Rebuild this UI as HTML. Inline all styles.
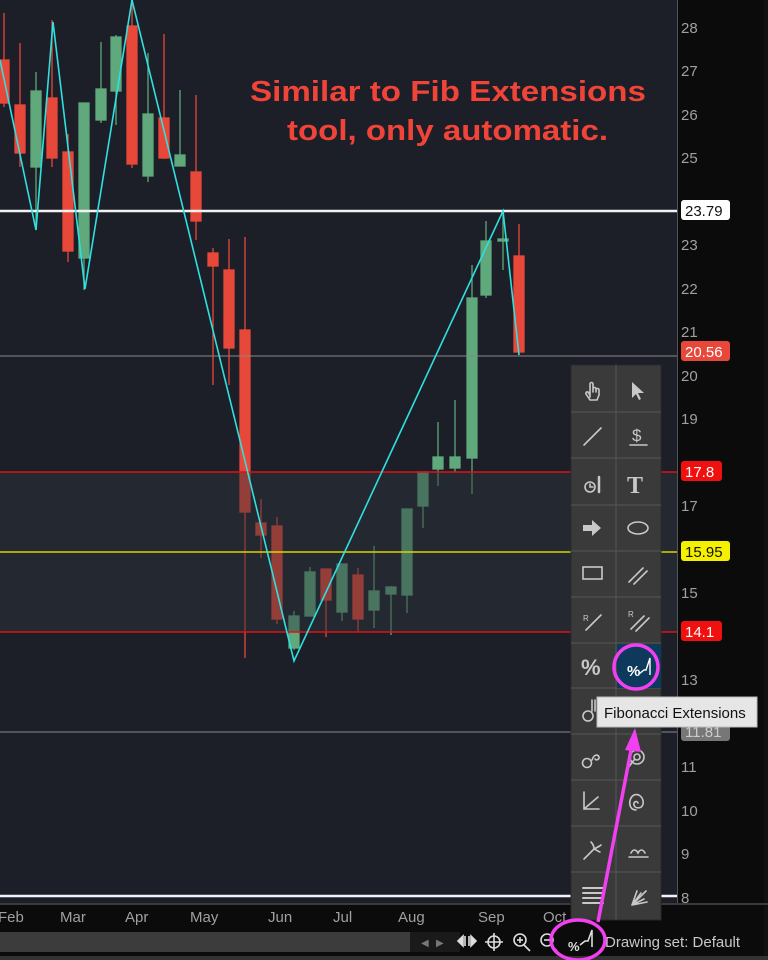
<!DOCTYPE html>
<html><head><meta charset="utf-8"><style>
html,body{margin:0;padding:0;background:#0b0b0b;}
svg{display:block;font-family:"Liberation Sans",sans-serif;}
</style></head><body>
<svg width="768" height="960" viewBox="0 0 768 960" xmlns="http://www.w3.org/2000/svg">
<!-- chart bg -->
<rect x="0" y="0" width="677" height="903" fill="#1c1f28"/>
<rect x="677" y="0" width="91" height="930" fill="#0b0b0b"/>
<line x1="677.5" y1="0" x2="677.5" y2="903" stroke="#555" stroke-width="1"/>
<rect x="764" y="0" width="4" height="960" fill="#111"/>

<!-- candles -->
<g stroke-width="1.3">
<!-- red -->
<g stroke="#e8483a" fill="#e8483a">
<line x1="4" y1="13" x2="4" y2="107"/><rect x="-1" y="60" width="10" height="43"/>
<line x1="20" y1="43" x2="20" y2="167"/><rect x="15" y="105" width="10" height="48"/>
<line x1="52" y1="20" x2="52" y2="167"/><rect x="47" y="98" width="10" height="60"/>
<line x1="68" y1="134" x2="68" y2="262"/><rect x="63" y="152" width="10" height="99"/>
<line x1="132" y1="0" x2="132" y2="168"/><rect x="127" y="26" width="10" height="138"/>
<line x1="164" y1="34" x2="164" y2="159"/><rect x="159" y="118" width="10" height="40"/>
<line x1="196" y1="95" x2="196" y2="240"/><rect x="191" y="172" width="10" height="49"/>
<line x1="213" y1="248" x2="213" y2="385"/><rect x="208" y="253" width="10" height="13"/>
<line x1="229" y1="239" x2="229" y2="385"/><rect x="224" y="270" width="10" height="78"/>
<line x1="245" y1="237" x2="245" y2="658"/><rect x="240" y="330" width="10" height="182"/>
<line x1="261" y1="499" x2="261" y2="558"/><rect x="256" y="523" width="10" height="12"/>
<line x1="277" y1="517" x2="277" y2="624"/><rect x="272" y="526" width="10" height="93"/>
<line x1="326" y1="569" x2="326" y2="637"/><rect x="321" y="569" width="10" height="31"/>
<line x1="358" y1="568" x2="358" y2="632"/><rect x="353" y="575" width="10" height="44"/>
<line x1="519" y1="224" x2="519" y2="355"/><rect x="514" y="256" width="10" height="96"/>
</g>
<!-- green -->
<g stroke="#5fa97c" fill="#5fa97c">
<line x1="36" y1="72" x2="36" y2="230"/><rect x="31" y="91" width="10" height="76"/>
<line x1="84" y1="103" x2="84" y2="290"/><rect x="79" y="103" width="10" height="155"/>
<line x1="101" y1="42" x2="101" y2="123"/><rect x="96" y="89" width="10" height="31"/>
<line x1="116" y1="35" x2="116" y2="125"/><rect x="111" y="37" width="10" height="54"/>
<line x1="148" y1="53" x2="148" y2="182"/><rect x="143" y="114" width="10" height="62"/>
<line x1="180" y1="90" x2="180" y2="166"/><rect x="175" y="155" width="10" height="11"/>
<line x1="294" y1="611" x2="294" y2="650"/><rect x="289" y="616" width="10" height="32"/>
<line x1="310" y1="567" x2="310" y2="616"/><rect x="305" y="572" width="10" height="44"/>
<line x1="342" y1="564" x2="342" y2="621"/><rect x="337" y="564" width="10" height="48"/>
<line x1="374" y1="546" x2="374" y2="628"/><rect x="369" y="591" width="10" height="19"/>
<line x1="391" y1="586" x2="391" y2="635"/><rect x="386" y="587" width="10" height="7"/>
<line x1="407" y1="509" x2="407" y2="613"/><rect x="402" y="509" width="10" height="86"/>
<line x1="423" y1="472" x2="423" y2="528"/><rect x="418" y="472" width="10" height="34"/>
<line x1="438" y1="422" x2="438" y2="486"/><rect x="433" y="457" width="10" height="12"/>
<line x1="455" y1="400" x2="455" y2="472"/><rect x="450" y="457" width="10" height="11"/>
<line x1="472" y1="265" x2="472" y2="494"/><rect x="467" y="298" width="10" height="160"/>
<line x1="486" y1="221" x2="486" y2="298"/><rect x="481" y="241" width="10" height="54"/>
<line x1="503" y1="212" x2="503" y2="270"/><rect x="498" y="239" width="10" height="2"/>
</g>
</g>

<!-- shaded band overlay -->
<rect x="0" y="472" width="677" height="160" fill="#2f323b" opacity="0.45"/>

<!-- horizontal levels -->
<line x1="0" y1="211" x2="677" y2="211" stroke="#f2f2f2" stroke-width="2.5"/>
<line x1="0" y1="356" x2="677" y2="356" stroke="#888" stroke-width="1"/>
<line x1="0" y1="472" x2="677" y2="472" stroke="#e01010" stroke-width="1.5"/>
<line x1="0" y1="552" x2="677" y2="552" stroke="#d8d400" stroke-width="1.5"/>
<line x1="0" y1="632" x2="677" y2="632" stroke="#e01010" stroke-width="1.5"/>
<line x1="0" y1="732" x2="677" y2="732" stroke="#888" stroke-width="1"/>
<line x1="0" y1="896" x2="677" y2="896" stroke="#f2f2f2" stroke-width="2.5"/>

<!-- zigzag -->
<polyline points="0,60 36,230 53,22 85,289 132,0 294,661 503,211 519,355" fill="none" stroke="#2fe0e0" stroke-width="1.6"/>

<!-- title -->
<g fill="#f04438" font-weight="bold" font-size="29">
<text x="250" y="101" textLength="396" lengthAdjust="spacingAndGlyphs">Similar to Fib Extensions</text>
<text x="287" y="140" textLength="321" lengthAdjust="spacingAndGlyphs">tool, only automatic.</text>
</g>

<!-- price axis labels -->
<g fill="#a0a0a0" font-size="15">
<text x="681" y="33">28</text>
<text x="681" y="76">27</text>
<text x="681" y="120">26</text>
<text x="681" y="163">25</text>
<text x="681" y="250">23</text>
<text x="681" y="294">22</text>
<text x="681" y="337">21</text>
<text x="681" y="381">20</text>
<text x="681" y="424">19</text>
<text x="681" y="511">17</text>
<text x="681" y="598">15</text>
<text x="681" y="685">13</text>
<text x="681" y="772">11</text>
<text x="681" y="816">10</text>
<text x="681" y="859">9</text>
<text x="681" y="903">8</text>
</g>
<rect x="681" y="200" width="49" height="20" rx="3" fill="#fff"/>
<text x="685" y="216" font-size="15" fill="#111">23.79</text>
<rect x="681" y="341" width="49" height="20" rx="3" fill="#e8483a"/>
<text x="685" y="357" font-size="15" fill="#fff">20.56</text>
<rect x="681" y="461" width="41" height="20" rx="3" fill="#f01010"/>
<text x="685" y="477" font-size="15" fill="#fff">17.8</text>
<rect x="681" y="541" width="49" height="20" rx="3" fill="#f4f000"/>
<text x="685" y="557" font-size="15" fill="#111">15.95</text>
<rect x="681" y="621" width="41" height="20" rx="3" fill="#f01010"/>
<text x="685" y="637" font-size="15" fill="#fff">14.1</text>
<rect x="681" y="721" width="49" height="20" rx="3" fill="#777"/>
<text x="685" y="737" font-size="15" fill="#ccc">11.81</text>

<!-- bottom area -->
<rect x="0" y="903" width="768" height="2" fill="#3a3a3a"/>
<rect x="0" y="905" width="764" height="26" fill="#0b0b0b"/>
<g fill="#a0a0a0" font-size="15">
<text x="-2" y="922">Feb</text>
<text x="60" y="922">Mar</text>
<text x="125" y="922">Apr</text>
<text x="190" y="922">May</text>
<text x="268" y="922">Jun</text>
<text x="333" y="922">Jul</text>
<text x="398" y="922">Aug</text>
<text x="478" y="922">Sep</text>
<text x="543" y="922">Oct</text>
</g>
<rect x="0" y="932" width="410" height="20" fill="#3c3c3c"/>
<rect x="410" y="932" width="50" height="20" fill="#1a1a1a"/>
<text x="421" y="946" font-size="10" fill="#777">◀</text>
<text x="436" y="946" font-size="10" fill="#777">▶</text>
<rect x="0" y="956" width="768" height="4" fill="#333"/>
<!-- bottom icons -->
<g stroke="#ddd" fill="none" stroke-width="1.6">
<path d="M458 941 l5 -5 v10 z M476 941 l-5 -5 v10 z" fill="#ddd"/>
<line x1="465" y1="936" x2="465" y2="946"/><line x1="469" y1="936" x2="469" y2="946"/>
<circle cx="494" cy="942" r="6"/><line x1="494" y1="933" x2="494" y2="951"/><line x1="485" y1="942" x2="503" y2="942"/>
<circle cx="520" cy="940" r="6"/><line x1="517" y1="940" x2="523" y2="940"/><line x1="520" y1="937" x2="520" y2="943"/><line x1="524" y1="945" x2="530" y2="951"/>
<circle cx="547" cy="940" r="6"/><line x1="544" y1="940" x2="550" y2="940"/><line x1="551" y1="945" x2="557" y2="951"/>
<path d="M580 945 l5 -4 l3 0 l4 -11 v17"/>
</g>
<text x="568" y="951" font-size="13" font-weight="bold" fill="#ddd">%</text>
<text x="605" y="947" font-size="15" fill="#c8c8c8">Drawing set: Default</text>

<!-- toolbar -->
<rect x="571" y="365" width="90" height="555" fill="#3a3a3a" stroke="#2a2a2a"/>
<g stroke="#555" stroke-width="1">
<line x1="616" y1="365" x2="616" y2="920"/>
<line x1="571" y1="412" x2="661" y2="412"/><line x1="571" y1="458" x2="661" y2="458"/>
<line x1="571" y1="505" x2="661" y2="505"/><line x1="571" y1="551" x2="661" y2="551"/>
<line x1="571" y1="597" x2="661" y2="597"/><line x1="571" y1="643" x2="661" y2="643"/>
<line x1="571" y1="688" x2="661" y2="688"/><line x1="571" y1="734" x2="661" y2="734"/>
<line x1="571" y1="780" x2="661" y2="780"/><line x1="571" y1="826" x2="661" y2="826"/>
<line x1="571" y1="872" x2="661" y2="872"/>
</g>
<g stroke="#c8c8c8" fill="none" stroke-width="1.6" stroke-linecap="round">
<!-- hand -->
<path d="M590 397 v-13 a1.5 1.5 0 0 1 3 0 v8 m0 -3 a1.5 1.5 0 0 1 3 0 v3 m0 -2 a1.5 1.5 0 0 1 3 0 v5 l-2 5 h-7 l-4 -6 a1.5 1.5 0 0 1 2 -2 l2 3"/>
<!-- line -->
<line x1="584" y1="445" x2="601" y2="428"/>
<!-- clock bar -->
<circle cx="590" cy="487" r="5"/><path d="M590 484 v3 h3"/><line x1="599" y1="477" x2="599" y2="492" stroke-width="2.5"/>
<!-- rect -->
<rect x="583" y="567" width="19" height="12"/>
<!-- R line -->
<line x1="586" y1="630" x2="601" y2="615"/>
<!-- percent placeholder at 662 -->
<!-- ellipse -->
<ellipse cx="638" cy="528" rx="10" ry="6"/>
<!-- double lines -->
<line x1="629" y1="582" x2="643" y2="568"/><line x1="634" y1="584" x2="647" y2="571"/>
<line x1="631" y1="629" x2="644" y2="616"/><line x1="636" y1="631" x2="649" y2="618"/>
<!-- dollar underline -->
<line x1="630" y1="445" x2="647" y2="445"/>
<!-- row 8 left -->
<circle cx="588" cy="716" r="5"/><line x1="592" y1="700" x2="592" y2="711"/><line x1="595" y1="700" x2="595" y2="711"/>
<!-- row 9 -->
<circle cx="587" cy="763" r="4.5"/><path d="M592 760 c2 -6 6 -6 7 -3 c1 2 -3 4 -4 2"/>
<circle cx="637" cy="757" r="7"/><circle cx="637" cy="757" r="3"/><line x1="634" y1="760" x2="628" y2="768"/>
<!-- row 10 -->
<path d="M584 792 v17 h15 M584 809 l14 -12"/>
<path d="M636 810 c-8 0 -8 -12 -2 -15 c6 -2 10 4 9 9 c-1 5 -8 5 -9 1 c-1 -3 3 -5 4 -2"/>
<!-- row 11 -->
<path d="M584 859 l10 -10 m0 0 c0 -4 -2 -6 -3 -7 m3 7 c4 -2 6 -3 7 -4 m-7 4 c3 1 5 3 6 3"/>
<path d="M629 857 h19 M631 853 c2 -4 5 -4 7 0 c2 -4 5 -4 7 0"/>
<!-- row 12 -->
<path d="M583 888 h20 M583 893 h20 M583 898 h20 M583 903 h20" stroke-width="2"/>
<path d="M632 905 l14 -14 M632 905 l12 -6 M632 905 l5 -14 M632 905 l15 -3 M632 905 l9 -12"/>
</g>
<!-- pointer -->
<path d="M632 382 v16 l4 -4 l3 6 l2 -1 l-3 -6 h6 z" fill="#c8c8c8"/>
<!-- dollar -->
<text x="632" y="441" font-size="17" fill="#c8c8c8">$</text>
<!-- T -->
<text x="627" y="493" font-size="24" font-weight="bold" font-family="Liberation Serif" fill="#c8c8c8">T</text>
<!-- arrow -->
<path d="M583 525 h9 v-5 l9 8 l-9 8 v-5 h-9 z" fill="#c8c8c8"/>
<text x="583" y="621" font-size="8" fill="#c8c8c8">R</text>
<text x="628" y="617" font-size="8" fill="#c8c8c8">R</text>
<text x="581" y="675" font-size="22" font-weight="bold" fill="#c8c8c8">%</text>
<!-- selected fib ext -->
<rect x="617" y="644" width="44" height="44" fill="#0d3a5c"/>
<text x="627" y="676" font-size="15" font-weight="bold" fill="#fff">%</text>
<path d="M639 674 l5 -4 h2 l4 -12 v17" stroke="#fff" fill="none" stroke-width="1.4"/>

<!-- tooltip -->
<rect x="597" y="697" width="160" height="30" fill="#e6e6e6" stroke="#bbb"/>
<text x="604" y="718" font-size="15" fill="#111">Fibonacci Extensions</text>

<!-- magenta annotations -->
<g stroke="#f040f0" fill="none" stroke-width="3.5">
<circle cx="636" cy="667" r="22"/>
<ellipse cx="578" cy="940" rx="27" ry="20"/>
<line x1="598" y1="922" x2="632" y2="745"/>
</g>
<path d="M635 728 l-10 22 l16 2 z" fill="#f040f0"/>
</svg>
</body></html>
